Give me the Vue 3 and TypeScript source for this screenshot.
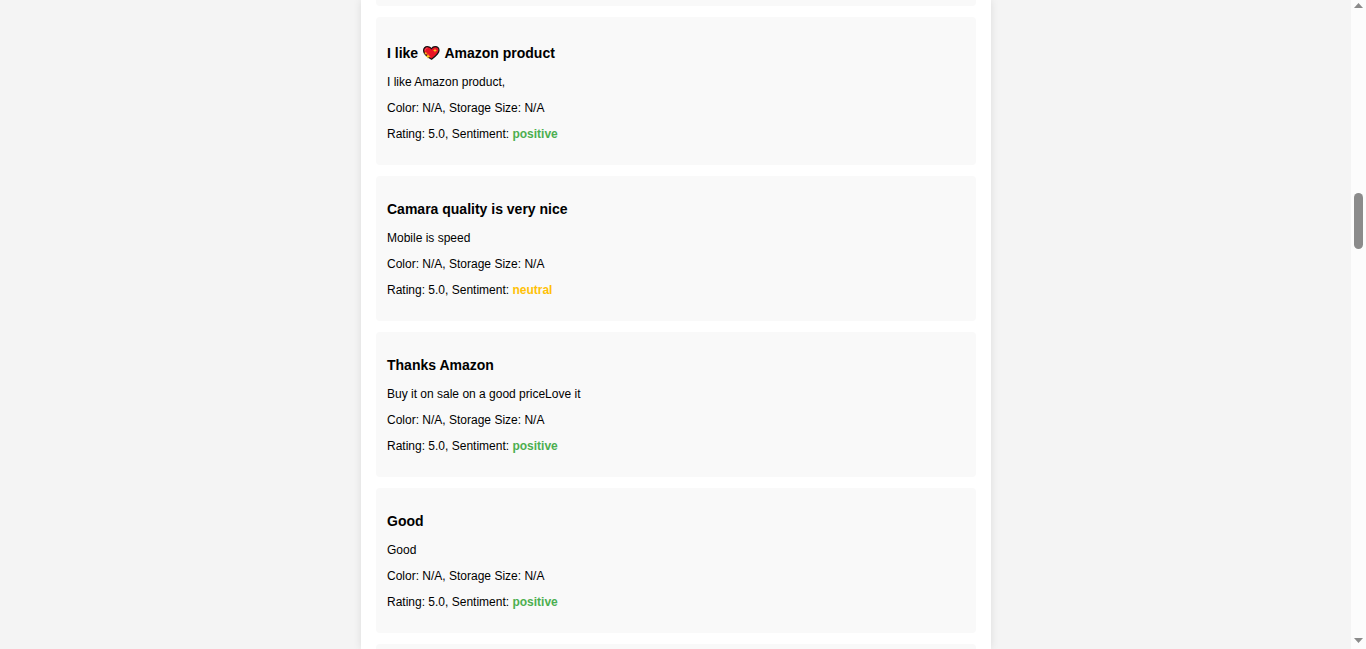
<script setup lang="ts">
type Sentiment = 'positive' | 'neutral'

interface Review {
  id: number
  before: string
  after?: string
  body: string
  rating: string
  sentiment: Sentiment
}

const reviews: Review[] = [
  { id: 1, before: 'I like', after: 'Amazon product', body: 'I like Amazon product,', rating: '5.0', sentiment: 'positive' },
  { id: 2, before: 'Camara quality is very nice', body: 'Mobile is speed', rating: '5.0', sentiment: 'neutral' },
  { id: 3, before: 'Thanks Amazon', body: 'Buy it on sale on a good priceLove it', rating: '5.0', sentiment: 'positive' },
  { id: 4, before: 'Good', body: 'Good', rating: '5.0', sentiment: 'positive' },
]
</script>

<template>
  <div class="window">
    <div class="page">
      <main class="container">
        <div class="review edge-top"></div>
        <article v-for="r in reviews" :key="r.id" class="review">
          <h3>
            {{ r.before }}
            <template v-if="r.after">
              <svg class="heart" viewBox="0 0 19 19" role="img" aria-label="sparkling heart">
                <path d="M9.500 17.200C6.500 15.500 1.700 12.500 1.600 8.700C1.500 6.200 3.200 4.600 5.400 4.600C7.300 4.600 8.700 5.500 9.400 6.800C10.200 5.500 11.500 4.600 13.200 4.600C15.600 4.600 17.200 6.200 17 8.600C16.700 12 12.300 15 9.500 17.200Z" fill="#e81224" stroke="#111" stroke-width="1.2" stroke-linejoin="round" />
                <path d="M3.200 8.500C3.300 7 4.200 6 5.500 6" fill="none" stroke="#f4606b" stroke-width="1" />
                <path d="M13 6.200L13.600 7.900L15.200 8.500L13.600 9.100L13 10.800L12.400 9.100L10.800 8.500L12.400 7.900Z" fill="#fcc419" />
                <path d="M3.800 9.500L4.300 10.700L5.500 11.200L4.300 11.700L3.800 12.900L3.300 11.700L2.100 11.200L3.300 10.700Z" fill="#fcc419" />
                <path d="M6 11.700L6.700 13.600L8.600 14.300L6.700 15L6 16.900L5.300 15L3.400 14.300L5.300 13.600Z" fill="#fcc419" />
              </svg>
              {{ r.after }}
            </template>
          </h3>
          <p>{{ r.body }}</p>
          <p>Color: N/A, Storage Size: N/A</p>
          <p>Rating: {{ r.rating }}, Sentiment: <span :class="r.sentiment">{{ r.sentiment }}</span></p>
        </article>
        <div class="review edge-bottom"></div>
      </main>
    </div>
    <div class="scrollbar" aria-hidden="true">
      <svg viewBox="0 0 15 15"><path d="M3 8L7.500 3L12 8Z" /></svg>
      <div class="thumb"></div>
      <svg class="down" viewBox="0 0 15 15"><path d="M3 4L7.500 9L12 4Z" /></svg>
    </div>
  </div>
</template>

<style>
body {
  margin: 0;
  background: #f4f4f4;
}
</style>

<style scoped>
.window {
  display: flex;
  height: 100vh;
  overflow: hidden;
  background: #f4f4f4;
  color: #000;
  font-family: Arial, "Liberation Sans", sans-serif;
  font-size: 12px;
  line-height: 14px;
}

.page {
  display: flex;
  flex: 1;
  justify-content: center;
  padding-left: 1px;
}

.container {
  display: flex;
  flex-direction: column;
  gap: 11px;
  box-sizing: border-box;
  width: 100%;
  max-width: 630px;
  padding: 0 15px;
  background: #fff;
  box-shadow: 0 0 8px rgba(0, 0, 0, 0.1);
}

.review {
  flex: none;
  padding: 25px 11px 24px;
  border-radius: 4px;
  background: #f9f9f9;
}

.edge-top {
  padding: 3px;
  border-radius: 0 0 4px 4px;
}

.edge-bottom {
  flex: 1;
  padding: 0;
  border-radius: 4px 4px 0 0;
}

h3 {
  margin: 0 0 14px;
  font-size: 14px;
  line-height: 16px;
}

.heart {
  width: 19px;
  height: 19px;
  vertical-align: -3px;
}

p {
  margin: 0 0 12px;
}

p:last-child {
  margin-bottom: 0;
}

.positive,
.neutral {
  font-weight: bold;
}

.positive {
  color: #4caf50;
}

.neutral {
  color: #ffc107;
}

.scrollbar {
  display: grid;
  grid-template-rows: 15px 178fr 56px 385fr 15px;
  flex: none;
  width: 15px;
  background: #fcfcfc;
}

.scrollbar svg {
  width: 15px;
  height: 15px;
  fill: #8b8b8b;
}

.thumb {
  grid-row: 3;
  width: 9px;
  margin-left: 3px;
  border-radius: 5px;
  background: #8b8b8b;
}

.down {
  grid-row: 5;
}
</style>
